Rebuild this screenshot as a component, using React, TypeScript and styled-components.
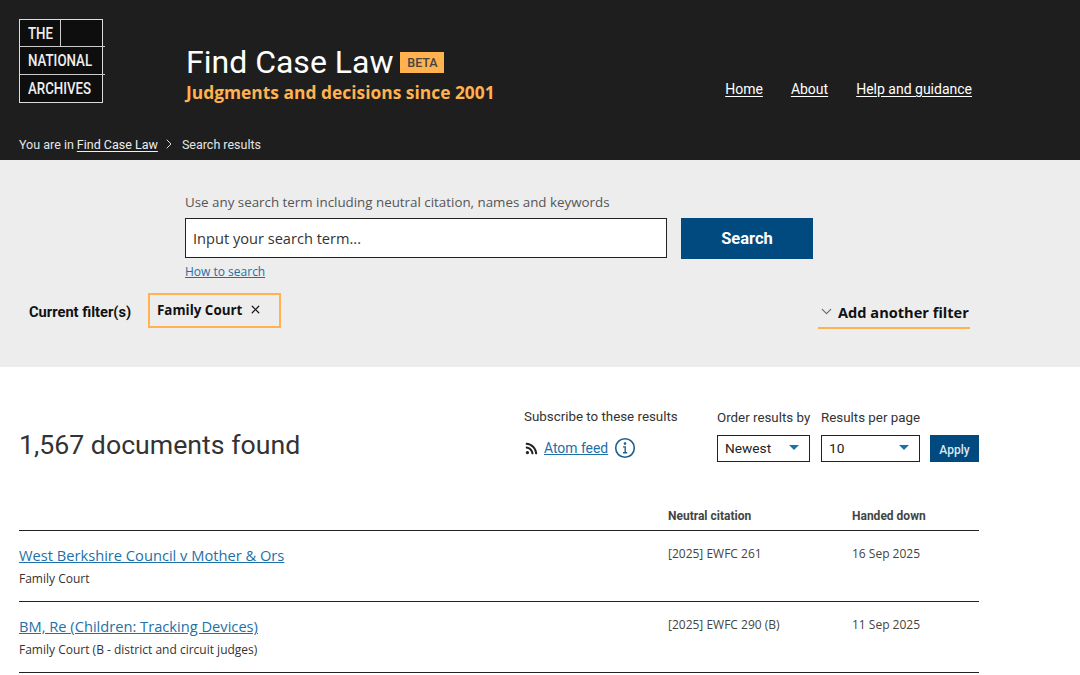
import React from "react";
import styled, { createGlobalStyle } from "styled-components";
import { ChevronDown, ChevronRight, X } from "lucide-react";
import { FaRss } from "react-icons/fa";

const GlobalStyle = createGlobalStyle`
  html, body {
    margin: 0;
    padding: 0;
    background: #fff;
    overflow: hidden;
  }
  * {
    box-sizing: border-box;
  }
`;

const Page = styled.div`
  width: 1080px;
  height: 675px;
  overflow: hidden;
  font-family: "Open Sans", sans-serif;
  color: #333;
`;

const Header = styled.header`
  height: 160px;
  background: #1e1e1e;
  padding: 19px 19px 0;
  display: flex;
  flex-direction: column;
`;

const HeaderMain = styled.div`
  display: flex;
  height: 108px;
`;

const Logo = styled.div`
  width: 84px;
  height: 84px;
  flex: none;
  border: 1px solid #ddd;
  background: #0e0e0e;
  display: grid;
  grid-template-rows: repeat(3, 1fr);
  font-family: Roboto, sans-serif;
  font-weight: 500;
  font-size: 16px;
  color: #eee;
`;

const LogoRow = styled.div`
  display: flex;
  align-items: center;
  border-bottom: 1px solid #ccc;

  &:last-child {
    border-bottom: none;
  }
`;

const LogoCell = styled.div`
  height: 100%;
  display: flex;
  align-items: center;
  padding-left: 8px;
`;

const LogoThe = styled(LogoCell)`
  width: 41px;
  border-right: 1px solid #ccc;
`;

const LogoText = styled.span`
  display: inline-block;
  transform: scaleX(0.83);
  transform-origin: left center;
`;

const Brand = styled.div`
  margin-left: 83px;
  padding-top: 23px;
`;

const TitleRow = styled.div`
  display: flex;
  align-items: center;
  height: 40px;
`;

const Title = styled.h1`
  margin: 0;
  font-family: Roboto, sans-serif;
  font-weight: 400;
  font-size: 32px;
  color: #fff;
`;

const Beta = styled.span`
  margin-left: 7px;
  width: 44px;
  height: 21px;
  background: #ffb24d;
  color: #444;
  font-family: Roboto, sans-serif;
  font-weight: 500;
  font-size: 12.5px;
  display: flex;
  align-items: center;
  justify-content: center;
`;

const Tagline = styled.div`
  font-weight: 700;
  font-size: 17.4px;
  line-height: 20px;
  color: #ffb24d;
`;

const Nav = styled.nav`
  margin-left: auto;
  padding: 61px 89px 0 0;
  display: flex;
  gap: 28px;
  align-items: flex-start;
  font-family: Roboto, sans-serif;
`;

const NavLink = styled.a`
  font-size: 14px;
  line-height: 18px;
  color: #fff;
  text-decoration: underline;
  text-underline-offset: 2px;
`;

const Breadcrumb = styled.div`
  display: flex;
  align-items: center;
  height: 18px;
  margin-top: 8px;
  font-family: Roboto, sans-serif;
  font-size: 12.5px;
  color: #e4e4e4;

  svg {
    margin: 0 5px 0 3px;
    color: #ddd;
  }
`;

const CrumbLink = styled.a`
  margin-left: 3px;
  color: #eee;
  text-decoration: underline;
  text-underline-offset: 2px;
`;

const SearchBand = styled.section`
  height: 207px;
  background: #ededed;
  padding: 33px 110px 0 29px;
`;

const SearchBlock = styled.div`
  margin-left: 156px;
`;

const SearchLabel = styled.div`
  font-size: 13.35px;
  line-height: 19px;
  color: #555;
`;

const SearchRow = styled.div`
  display: flex;
  gap: 14px;
  margin-top: 6px;
`;

const SearchInput = styled.div`
  width: 482px;
  height: 40px;
  background: #fff;
  border: 1px solid #222;
  padding-left: 7px;
  display: flex;
  align-items: center;
  font-size: 14.6px;
  color: #333;
`;

const SearchButton = styled.button`
  width: 132px;
  height: 41px;
  border: none;
  background: #004a7f;
  color: #fff;
  font-family: Roboto, sans-serif;
  font-weight: 700;
  font-size: 16.5px;
`;

const HowTo = styled.a`
  display: inline-block;
  margin-top: 4px;
  font-size: 12px;
  line-height: 17px;
  color: #1d70a8;
  text-decoration: underline;
`;

const FilterRow = styled.div`
  display: flex;
  align-items: flex-start;
  margin-top: 12px;
`;

const FilterLabel = styled.div`
  width: 119px;
  align-self: center;
  padding-top: 2px;
  font-family: Roboto, sans-serif;
  font-weight: 700;
  font-size: 14.7px;
  color: #111;
`;

const FilterChip = styled.div`
  width: 133px;
  height: 35px;
  border: 2px solid #ffb24d;
  padding: 0 0 2px 7px;
  display: flex;
  align-items: center;
  gap: 7px;
  font-weight: 700;
  font-size: 13.4px;
  color: #111;
`;

const AddFilter = styled.div`
  margin-left: auto;
  width: 152px;
  height: 36px;
  padding-top: 3px;
  border-bottom: 2px solid #ffb24d;
  display: flex;
  align-items: center;
  gap: 3px;
  font-weight: 700;
  font-size: 14.6px;
  color: #111;
  white-space: nowrap;

  svg {
    color: #666;
  }
`;

const Results = styled.main`
  padding: 0 101px 0 19px;
`;

const ResultsTop = styled.div`
  height: 130px;
  display: flex;
`;

const Count = styled.h2`
  margin: 62px 0 0;
  width: 505px;
  font-family: Roboto, sans-serif;
  font-weight: 400;
  font-size: 26.7px;
  line-height: 32px;
  color: #333;
`;

const Subscribe = styled.div`
  width: 193px;
  padding-top: 41px;
  font-family: Roboto, sans-serif;
`;

const ControlLabel = styled.div`
  font-size: 13.35px;
  line-height: 18px;
  color: #333;
  white-space: nowrap;
`;

const FeedRow = styled.div`
  display: flex;
  align-items: center;
  margin-top: 11px;
  height: 22px;
  padding-left: 1px;
  gap: 6px;

  svg {
    color: #222;
  }
`;

const FeedLink = styled.a`
  font-size: 13.9px;
  color: #1d70a8;
  text-decoration: underline;
`;

const Control = styled.div<{ $width: number }>`
  width: ${(p) => p.$width}px;
  padding-top: 42px;
  font-family: Roboto, sans-serif;
`;

const Select = styled.div<{ $width: number }>`
  width: ${(p) => p.$width}px;
  height: 27px;
  margin-top: 8px;
  background: #fff;
  border: 1px solid #222;
  padding: 0 10px 2px 7px;
  display: flex;
  align-items: center;
  justify-content: space-between;
  font-size: 13.7px;
  color: #222;
`;

const Caret = styled.span`
  width: 0;
  height: 0;
  border-left: 5px solid transparent;
  border-right: 5px solid transparent;
  border-top: 5px solid #1d70a8;
`;

const ApplyButton = styled.button`
  width: 49px;
  height: 27px;
  margin-top: 68px;
  border: none;
  background: #004a7f;
  color: #dfe8ef;
  font-family: Roboto, sans-serif;
  font-weight: 500;
  font-size: 12px;
  padding: 2px 0 0;
`;

const TableHead = styled.div`
  display: grid;
  grid-template-columns: 649px 184px 1fr;
  height: 34px;
  padding-top: 12px;
  border-bottom: 1px solid #222;
  font-family: Roboto, sans-serif;
  font-weight: 700;
  font-size: 12px;
  line-height: 14px;
  color: #444;
`;

const Row = styled.div`
  display: grid;
  grid-template-columns: 649px 184px 1fr;
  height: 71px;
  border-bottom: 1px solid #222;
  padding-top: 13px;
`;

const CaseTitle = styled.a`
  display: block;
  font-size: 14.67px;
  line-height: 22px;
  color: #1d70a8;
  text-decoration: underline;
`;

const Court = styled.div`
  margin-top: 5px;
  font-size: 12px;
  line-height: 16px;
  color: #333;
`;

const Cell = styled.div`
  margin-top: 1px;
  font-size: 12px;
  line-height: 17px;
  color: #444;
`;

const cases = [
  {
    title: "West Berkshire Council v Mother & Ors",
    court: "Family Court",
    citation: "[2025] EWFC 261",
    date: "16 Sep 2025",
  },
  {
    title: "BM, Re (Children: Tracking Devices)",
    court: "Family Court (B - district and circuit judges)",
    citation: "[2025] EWFC 290 (B)",
    date: "11 Sep 2025",
  },
];

const InfoIcon = () => (
  <svg width="22" height="22" viewBox="0 0 22 22" fill="none">
    <circle cx="11" cy="11" r="9.3" stroke="#1a5f90" strokeWidth="1.6" />
    <circle cx="11" cy="6.6" r="1.3" fill="#1a5f90" />
    <path d="M9 9.9H11.2V15.6M9 15.8H13.2" stroke="#1a5f90" strokeWidth="1.4" />
  </svg>
);

const App = () => {
  return (
    <Page>
      <GlobalStyle />
      <Header>
        <HeaderMain>
          <Logo>
            <LogoRow>
              <LogoThe>
                <LogoText>THE</LogoText>
              </LogoThe>
            </LogoRow>
            <LogoRow>
              <LogoCell>
                <LogoText>NATIONAL</LogoText>
              </LogoCell>
            </LogoRow>
            <LogoRow>
              <LogoCell>
                <LogoText>ARCHIVES</LogoText>
              </LogoCell>
            </LogoRow>
          </Logo>
          <Brand>
            <TitleRow>
              <Title>Find Case Law</Title>
              <Beta>BETA</Beta>
            </TitleRow>
            <Tagline>Judgments and decisions since 2001</Tagline>
          </Brand>
          <Nav>
            <NavLink>Home</NavLink>
            <NavLink>About</NavLink>
            <NavLink>Help and guidance</NavLink>
          </Nav>
        </HeaderMain>
        <Breadcrumb>
          You are in <CrumbLink>Find Case Law</CrumbLink>
          <ChevronRight size={16} strokeWidth={1.5} />
          Search results
        </Breadcrumb>
      </Header>

      <SearchBand>
        <SearchBlock>
          <SearchLabel>Use any search term including neutral citation, names and keywords</SearchLabel>
          <SearchRow>
            <SearchInput>Input your search term...</SearchInput>
            <SearchButton>Search</SearchButton>
          </SearchRow>
          <HowTo>How to search</HowTo>
        </SearchBlock>
        <FilterRow>
          <FilterLabel>Current filter(s)</FilterLabel>
          <FilterChip>
            Family Court
            <X size={13} strokeWidth={2.2} />
          </FilterChip>
          <AddFilter>
            <ChevronDown size={17} strokeWidth={1.6} />
            Add another filter
          </AddFilter>
        </FilterRow>
      </SearchBand>

      <Results>
        <ResultsTop>
          <Count>1,567 documents found</Count>
          <Subscribe>
            <ControlLabel>Subscribe to these results</ControlLabel>
            <FeedRow>
              <FaRss size={13} />
              <FeedLink>Atom feed</FeedLink>
              <InfoIcon />
            </FeedRow>
          </Subscribe>
          <Control $width={104}>
            <ControlLabel>Order results by</ControlLabel>
            <Select $width={93}>
              Newest
              <Caret />
            </Select>
          </Control>
          <Control $width={109}>
            <ControlLabel>Results per page</ControlLabel>
            <Select $width={99}>
              10
              <Caret />
            </Select>
          </Control>
          <ApplyButton>Apply</ApplyButton>
        </ResultsTop>
        <TableHead>
          <span />
          <span>Neutral citation</span>
          <span>Handed down</span>
        </TableHead>
        {cases.map((c) => (
          <Row key={c.title}>
            <div>
              <CaseTitle>{c.title}</CaseTitle>
              <Court>{c.court}</Court>
            </div>
            <Cell>{c.citation}</Cell>
            <Cell>{c.date}</Cell>
          </Row>
        ))}
      </Results>
    </Page>
  );
};

export default App;
